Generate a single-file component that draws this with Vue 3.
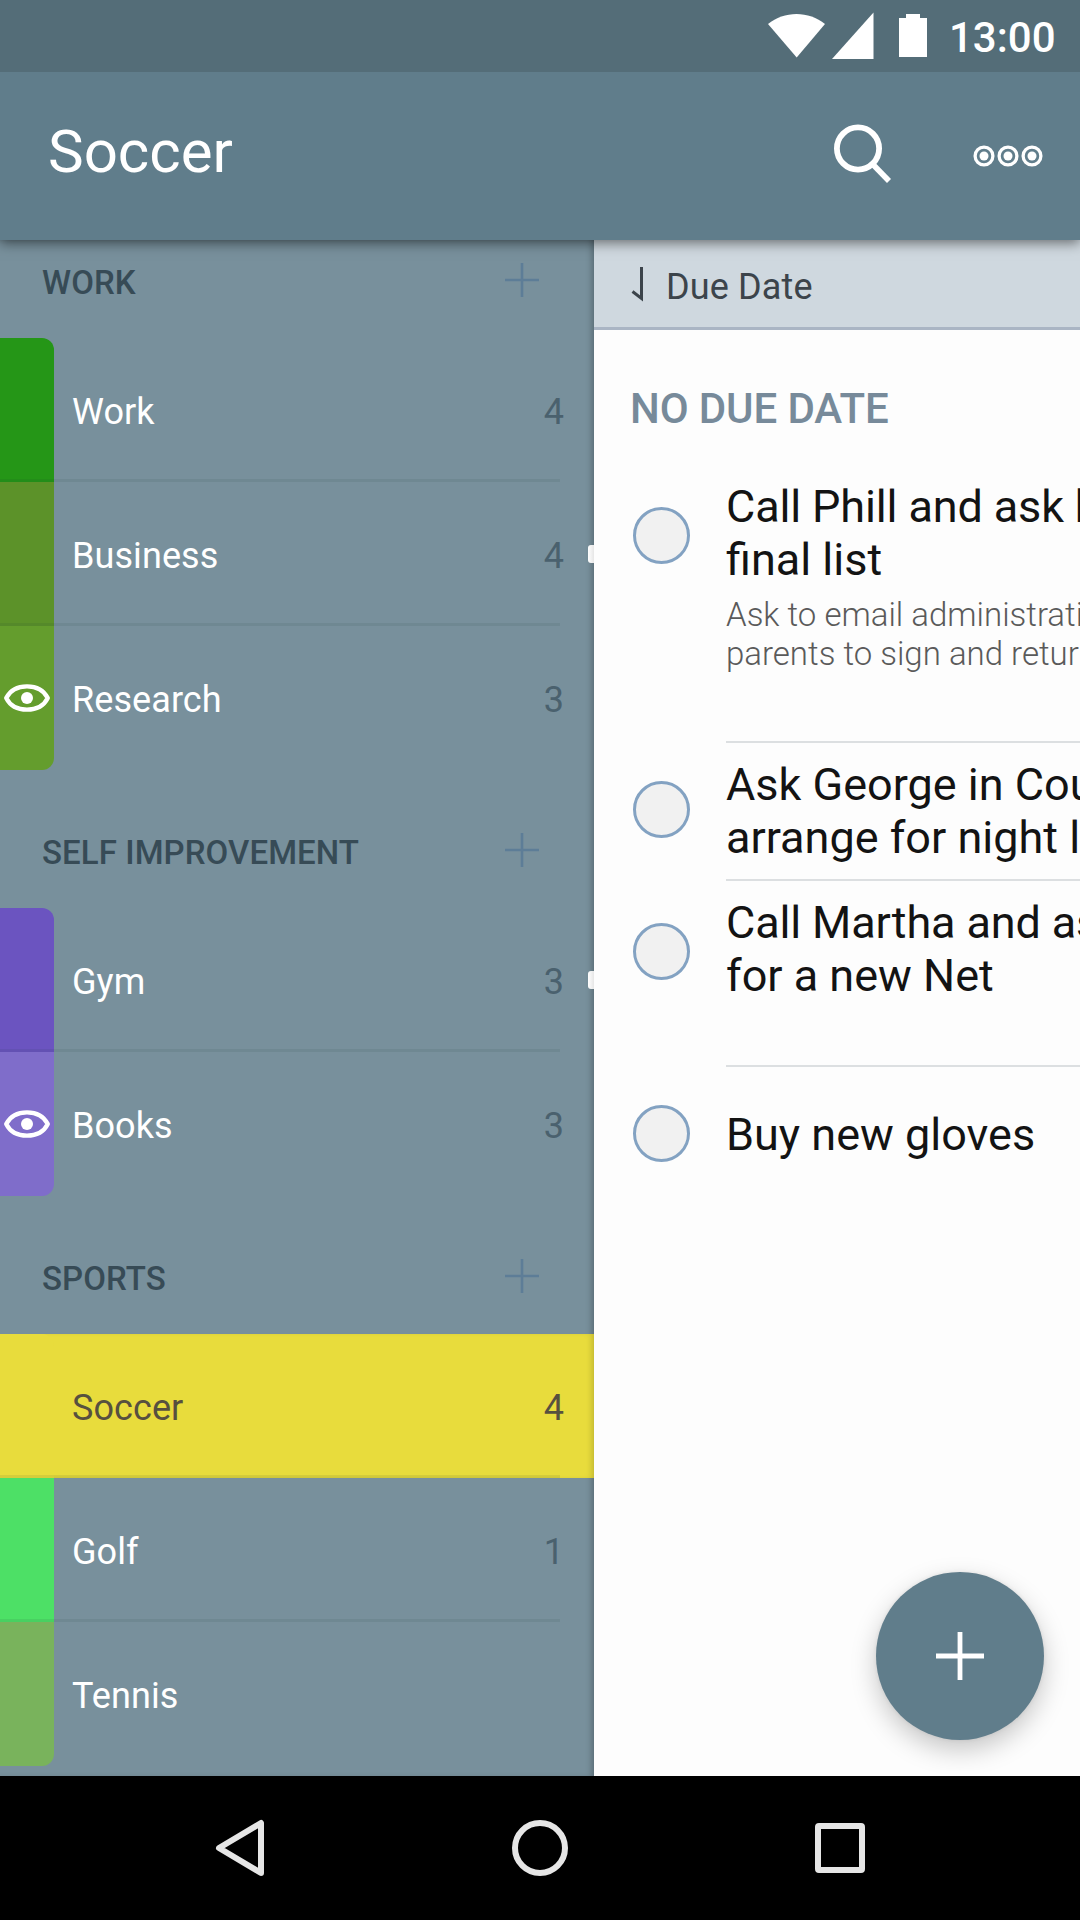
<script setup>
const groups = [
  {
    name: 'WORK',
    lists: [
      { name: 'Work', count: 4, color: '#259617' },
      { name: 'Business', count: 4, color: '#5c9229', handle: true },
      { name: 'Research', count: 3, color: '#649d2d', eye: true },
    ],
  },
  {
    name: 'SELF IMPROVEMENT',
    lists: [
      { name: 'Gym', count: 3, color: '#6b54c0', handle: true },
      { name: 'Books', count: 3, color: '#7f6dca', eye: true },
    ],
  },
  {
    name: 'SPORTS',
    lists: [
      { name: 'Soccer', count: 4, color: '#e8dc3c', active: true },
      { name: 'Golf', count: 1, color: '#4de066' },
      { name: 'Tennis', color: '#79b35c' },
    ],
  },
]

const tasks = [
  {
    size: 'tall',
    title: ['Call Phill and ask h', 'final list'],
    note: ['Ask to email administrati', 'parents to sign and retur'],
  },
  { size: 'short', title: ['Ask George in Cou', 'arrange for night l'] },
  { size: 'medium', title: ['Call Martha and as', 'for a new Net'] },
  { size: 'single', title: ['Buy new gloves'] },
]
</script>

<template>
  <div class="screen">
    <div class="status">
      <svg class="status-icons" width="180" height="72" viewBox="0 0 180 72" fill="#fff">
        <path d="M8 24C24 10.500 49 10.500 65 24L36.700 57.500Z" />
        <path d="M113.500 12.500V59H72Z" />
        <path d="M146 14h14v4h7v39h-28V18h7z" />
      </svg>
      <span class="clock">13:00</span>
    </div>

    <header class="toolbar">
      <h1>Soccer</h1>
      <svg class="search" width="60" height="60" viewBox="0 0 60 60" fill="none" stroke="#fff">
        <circle cx="24" cy="24.500" r="21.100" stroke-width="5.800" />
        <path d="M38.500 40L55 57" stroke-width="5.600" />
      </svg>
      <svg class="more" width="70" height="22" viewBox="0 0 70 22" fill="#fff">
        <g v-for="i in 3" :key="i">
          <circle :cx="24 * i - 13" cy="11" r="8.900" fill="none" stroke="#fff" stroke-width="3.300" />
          <circle :cx="24 * i - 13" cy="11" r="4.500" />
        </g>
      </svg>
    </header>

    <main class="content">
      <nav class="sidebar">
        <section v-for="g in groups" :key="g.name">
          <div class="group-head">
            <h2>{{ g.name }}</h2>
            <svg width="36" height="36" viewBox="0 0 36 36" stroke="#5d7d97" stroke-width="2.600">
              <path d="M18 1V35M1 18H35" />
            </svg>
          </div>
          <div class="group">
            <div v-for="l in g.lists" :key="l.name" class="row" :class="{ active: l.active }">
              <div class="swatch" :style="{ background: l.color }">
                <svg v-if="l.eye" width="48" height="30" viewBox="0 0 48 30">
                  <path
                    d="M3.200 15C7.500 6.500 15 3.300 24 3.300S40.500 6.500 44.800 15C40.500 23.500 33 26.700 24 26.700S7.500 23.500 3.200 15Z"
                    fill="none" stroke="#fff" stroke-width="4.300" stroke-linejoin="round" />
                  <circle cx="24" cy="15" r="6" fill="#fff" />
                </svg>
              </div>
              <span class="name">{{ l.name }}</span>
              <span class="count">{{ l.count }}</span>
              <i v-if="l.handle" class="handle"></i>
            </div>
          </div>
        </section>
      </nav>

      <section class="tasks">
        <div class="sort">
          <svg width="14" height="38" viewBox="0 0 14 38" fill="none" stroke="#3c444b" stroke-width="3">
            <path d="M10.500 1V32.500L1.500 25.500" />
          </svg>
          <span>Due Date</span>
        </div>
        <h3>NO DUE DATE</h3>
        <article v-for="t in tasks" :key="t.title[0]" class="task" :class="t.size">
          <div class="check"></div>
          <div class="body">
            <p v-for="line in t.title" :key="line" class="title">{{ line }}</p>
            <div v-if="t.note" class="note">
              <p v-for="line in t.note" :key="line">{{ line }}</p>
            </div>
          </div>
        </article>
      </section>

      <button class="fab">
        <svg width="48" height="48" viewBox="0 0 48 48" stroke="#fff" stroke-width="4.800">
          <path d="M24 0V48M0 24H48" />
        </svg>
      </button>
    </main>

    <footer class="navbar">
      <svg width="60" height="60" viewBox="0 0 60 60">
        <path d="M51 5V55L9 30Z" stroke-linejoin="round" />
      </svg>
      <svg width="60" height="60" viewBox="0 0 60 60"><circle cx="30" cy="30" r="25" /></svg>
      <svg width="60" height="60" viewBox="0 0 60 60"><rect x="8" y="8" width="44" height="44" rx="1" stroke-linejoin="round" /></svg>
    </footer>
  </div>
</template>

<style>
body {
  margin: 0;
}
</style>

<style scoped>
.screen {
  width: 1080px;
  height: 1920px;
  display: flex;
  flex-direction: column;
  overflow: hidden;
  font-family: Roboto, 'Noto Sans', sans-serif;
}
h1, h2, h3, p {
  margin: 0;
  font-weight: 400;
}
svg {
  display: block;
  flex: none;
}
.status {
  height: 72px;
  flex: none;
  display: flex;
  align-items: center;
  padding-left: 760px;
  background: #546d78;
  color: #fff;
  position: relative;
  z-index: 3;
}
.clock {
  font-size: 42px;
  font-weight: 500;
  line-height: 50px;
  margin-left: 9px;
  padding-top: 3px;
}
.toolbar {
  height: 168px;
  flex: none;
  box-sizing: border-box;
  display: flex;
  align-items: center;
  padding: 0 37px 0 48px;
  background: #607d8b;
  color: #fff;
  position: relative;
  z-index: 2;
  box-shadow: 0 3px 12px rgba(0, 0, 0, 0.5);
}
.toolbar h1 {
  flex: 1;
  font-size: 60px;
  line-height: 70px;
  padding-bottom: 9px;
}
.toolbar .search {
  margin-bottom: 4px;
}
.toolbar .more {
  margin-left: 79px;
}
.content {
  flex: 1;
  min-height: 0;
  display: flex;
  position: relative;
  background: #fdfdfd;
}
.sidebar {
  width: 594px;
  flex: none;
  background: #78909c;
  box-shadow: inset -5px 0 6px -3px rgba(0, 0, 0, 0.28);
  overflow: hidden;
}
.sidebar section:first-child {
  margin-top: -40px;
}
.group-head {
  height: 138px;
  box-sizing: border-box;
  display: flex;
  justify-content: space-between;
  align-items: flex-start;
  padding: 62px 54px 0 42px;
}
.group-head h2 {
  font-size: 33px;
  line-height: 42px;
  font-weight: 500;
  letter-spacing: 0.08px;
  color: #374b56;
}
.row {
  height: 144px;
  display: flex;
  align-items: center;
  position: relative;
  color: #fff;
  font-size: 36px;
  line-height: 42px;
}
.row:not(:last-child)::after {
  content: '';
  position: absolute;
  left: 0;
  bottom: 0;
  width: 560px;
  height: 3px;
  background: rgba(20, 50, 60, 0.09);
}
.swatch {
  width: 54px;
  height: 100%;
  display: flex;
  align-items: center;
  justify-content: center;
  overflow: hidden;
}
.row:first-child .swatch {
  border-top-right-radius: 12px;
}
.row:last-child .swatch {
  border-bottom-right-radius: 12px;
}
.name {
  flex: 1;
  padding: 3px 0 0 18px;
  letter-spacing: 0.08px;
}
.count {
  padding: 3px 30px 0 0;
  color: #4a616e;
}
.active {
  background: #e8dc3c;
  box-shadow: inset -5px 0 6px -3px rgba(0, 0, 0, 0.18);
}
.active .name,
.active .count {
  color: #57503f;
}
.handle {
  position: absolute;
  right: 0;
  top: 63px;
  width: 6px;
  height: 18px;
  border-radius: 3px 0 0 3px;
  background: linear-gradient(90deg, #fff, #e6e6e6);
}
.tasks {
  flex: 1;
  min-width: 0;
  overflow: hidden;
  white-space: nowrap;
}
.sort {
  height: 90px;
  box-sizing: border-box;
  display: flex;
  align-items: center;
  gap: 21px;
  padding: 2px 0 0 37px;
  background: #cfd8df;
  border-bottom: 3px solid #aab5c4;
  color: #3c444b;
  font-size: 36px;
  letter-spacing: 0.15px;
}
.sort span {
  padding-top: 5px;
}
h3 {
  height: 135px;
  box-sizing: border-box;
  padding: 54px 0 0 36px;
  font-size: 42px;
  line-height: 50px;
  font-weight: 500;
  letter-spacing: -0.12px;
  color: #778a9a;
}
.task {
  display: flex;
  gap: 36px;
  padding-left: 39px;
}
.tall { height: 278px; }
.short { height: 138px; }
.medium { height: 186px; }
.single { height: 140px; }
.check {
  width: 57px;
  height: 57px;
  flex: none;
  box-sizing: border-box;
  margin-top: 42px;
  border: 3px solid #83a2c2;
  border-radius: 50%;
  background: #f1f1f1;
}
.short .check,
.single .check {
  margin-top: 38px;
}
.body {
  flex: 1;
  min-width: 0;
  box-sizing: border-box;
  padding-top: 15px;
  border-bottom: 2px solid #dcdfe1;
}
.single .body {
  padding-top: 41px;
  border: 0;
}
.title {
  font-size: 45px;
  line-height: 53px;
  color: #131313;
}
.tall .title:first-child,
.medium .title:first-child {
  letter-spacing: -0.14px;
}
.note {
  margin-top: 9px;
  font-size: 33px;
  line-height: 39px;
  color: #5a5a5a;
}
.note p {
  font-weight: 300;
}
.fab {
  position: absolute;
  right: 36px;
  bottom: 36px;
  width: 168px;
  height: 168px;
  border: 0;
  padding: 0;
  border-radius: 50%;
  background: #607d8b;
  display: flex;
  align-items: center;
  justify-content: center;
  box-shadow: 0 10px 26px rgba(0, 0, 0, 0.22), 0 0 4px rgba(0, 0, 0, 0.08);
}
.navbar {
  height: 144px;
  flex: none;
  position: relative;
  z-index: 3;
  background: #000;
  display: flex;
  align-items: center;
  justify-content: center;
  gap: 240px;
}
.navbar svg {
  fill: none;
  stroke: #e6e6e6;
  stroke-width: 6;
}
</style>
